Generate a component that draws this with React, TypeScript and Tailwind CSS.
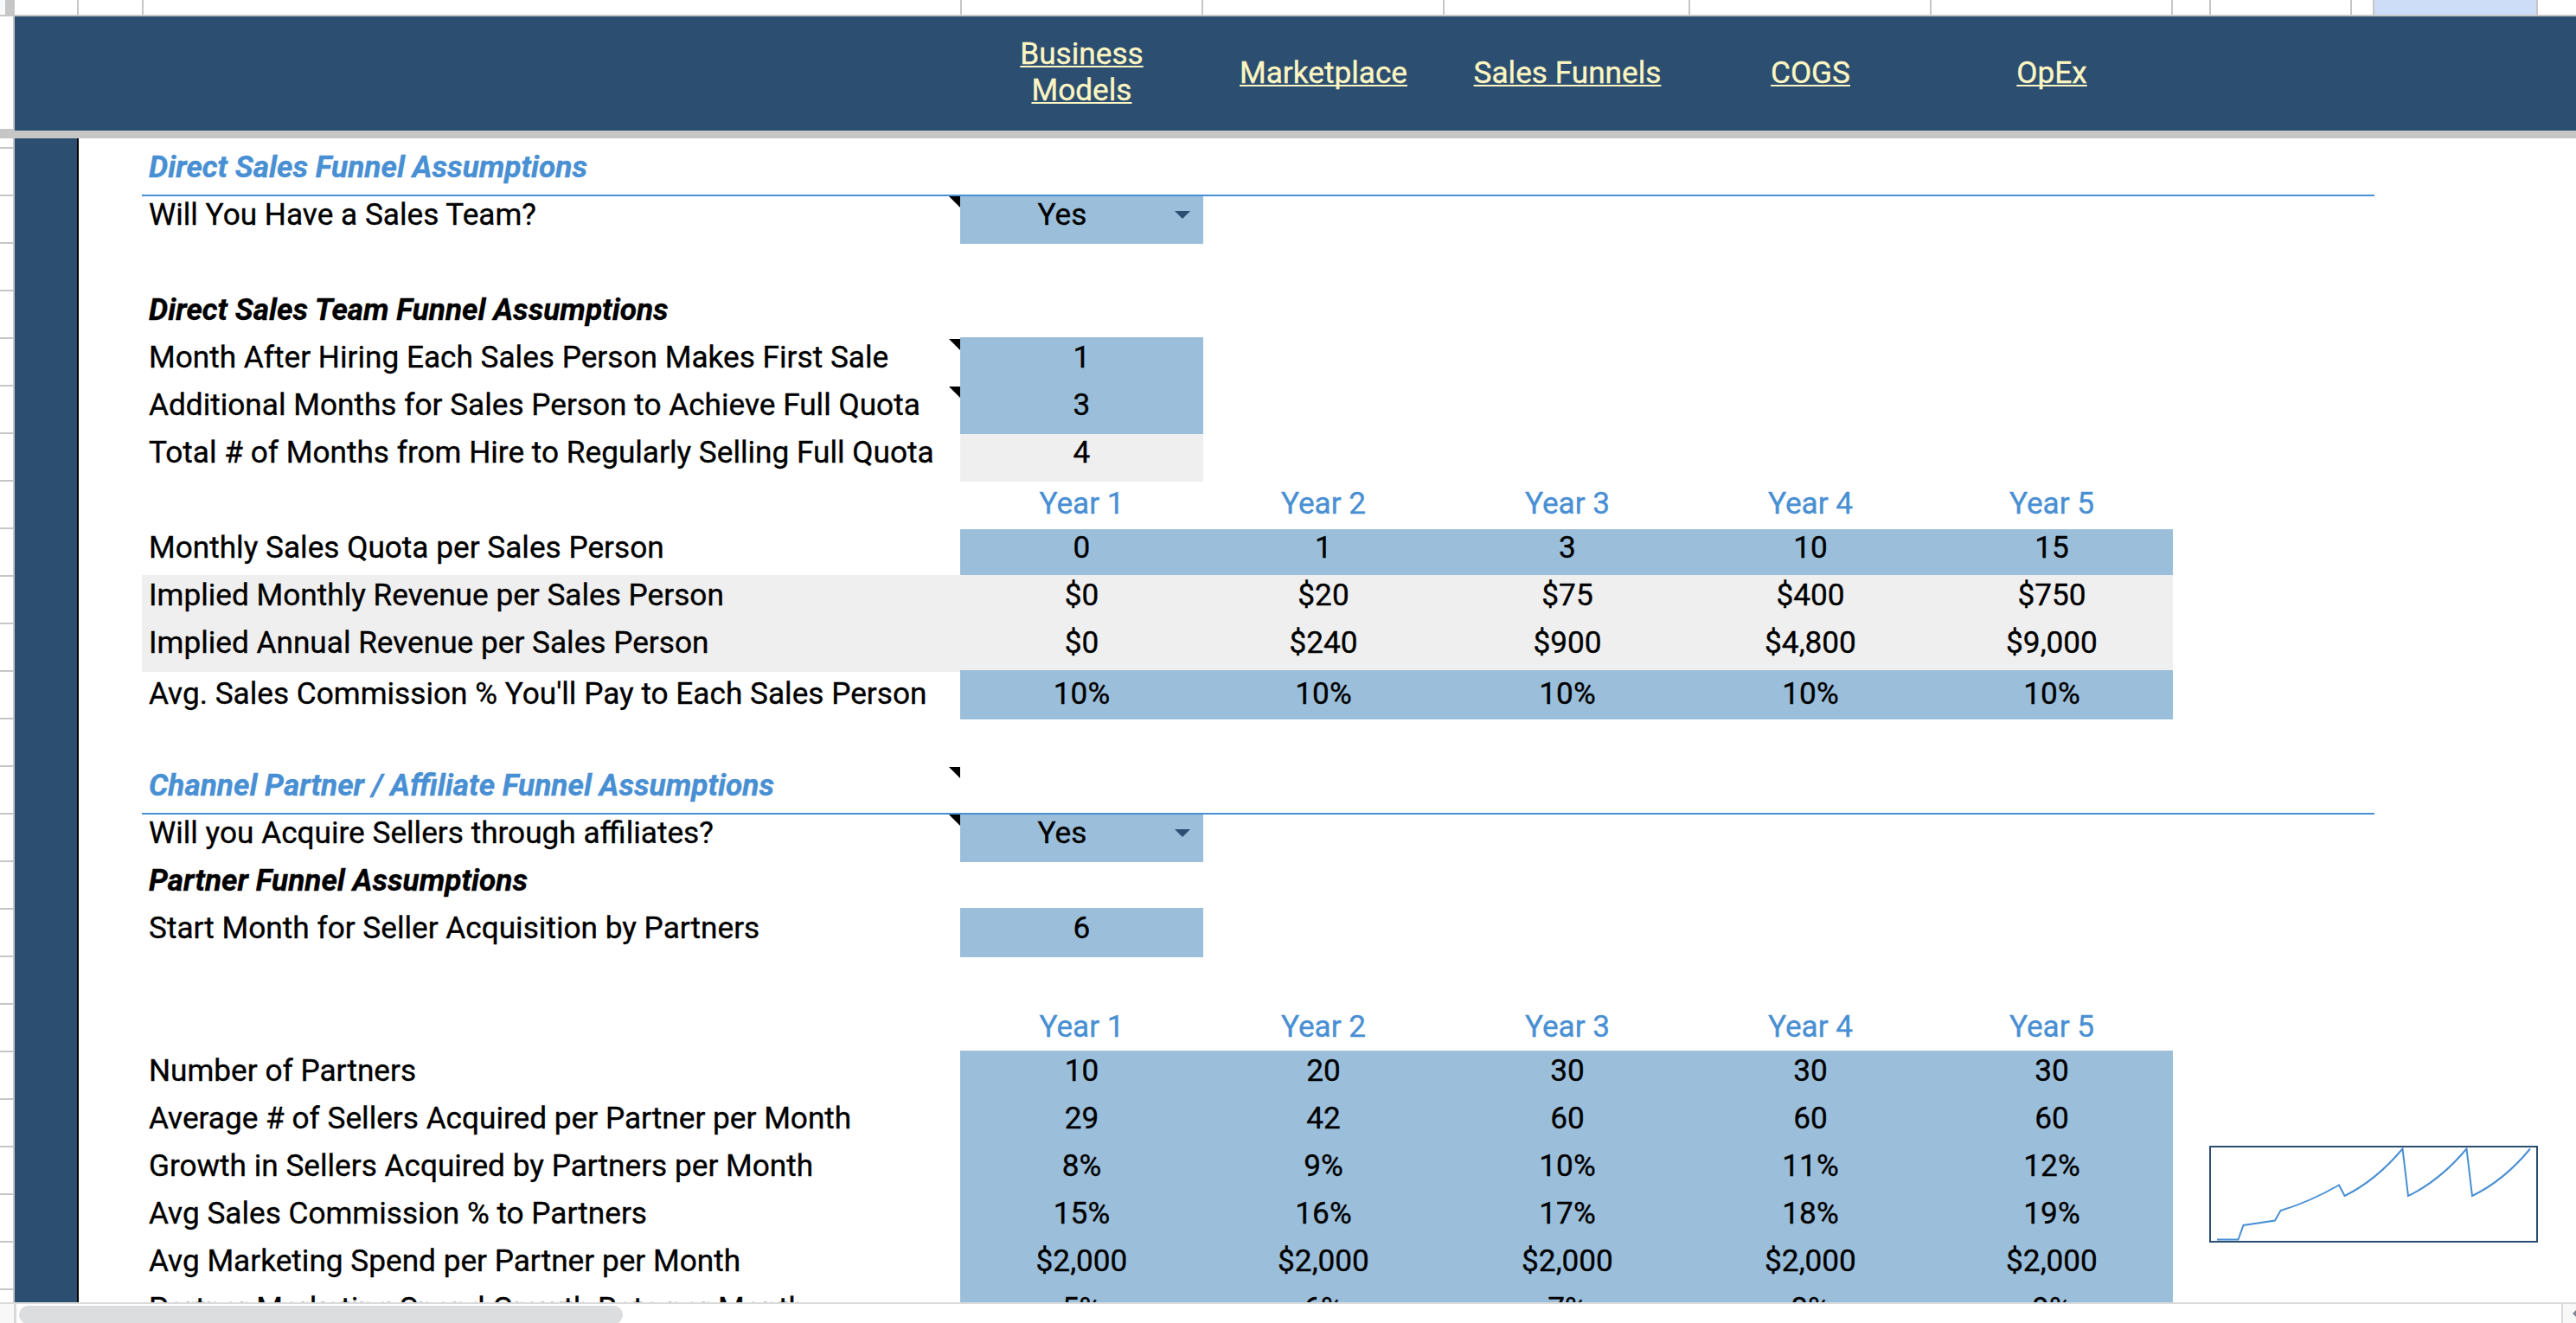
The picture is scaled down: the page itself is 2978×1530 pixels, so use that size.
import clsx from "clsx";

type Row = {
    label?: string;
    style?: "section" | "subtitle";
    note?: boolean;
    values?: string[];
    kind?: "input" | "calc" | "select" | "years";
    low?: boolean;
    shadeLabel?: boolean;
    overlapTop?: boolean;
};

const years = ["Year 1", "Year 2", "Year 3", "Year 4", "Year 5"];

const rows: Row[] = [
    { label: "Direct Sales Funnel Assumptions", style: "section" },
    { label: "Will You Have a Sales Team?", note: true, values: ["Yes"], kind: "select" },
    {},
    { label: "Direct Sales Team Funnel Assumptions", style: "subtitle" },
    { label: "Month After Hiring Each Sales Person Makes First Sale", note: true, values: ["1"], kind: "input", overlapTop: true },
    { label: "Additional Months for Sales Person to Achieve Full Quota", note: true, values: ["3"], kind: "input" },
    { label: "Total # of Months from Hire to Regularly Selling Full Quota", values: ["4"], kind: "calc" },
    { values: years, kind: "years", low: true },
    { label: "Monthly Sales Quota per Sales Person", values: ["0", "1", "3", "10", "15"], kind: "input" },
    { label: "Implied Monthly Revenue per Sales Person", values: ["$0", "$20", "$75", "$400", "$750"], kind: "calc", shadeLabel: true, overlapTop: true },
    { label: "Implied Annual Revenue per Sales Person", values: ["$0", "$240", "$900", "$4,800", "$9,000"], kind: "calc", shadeLabel: true },
    { label: "Avg. Sales Commission % You'll Pay to Each Sales Person", values: ["10%", "10%", "10%", "10%", "10%"], kind: "input", low: true, overlapTop: true },
    {},
    { label: "Channel Partner / Affiliate Funnel Assumptions", style: "section", note: true },
    { label: "Will you Acquire Sellers through affiliates?", note: true, values: ["Yes"], kind: "select" },
    { label: "Partner Funnel Assumptions", style: "subtitle" },
    { label: "Start Month for Seller Acquisition by Partners", values: ["6"], kind: "input", overlapTop: true },
    {},
    { values: years, kind: "years", low: true },
    { label: "Number of Partners", values: ["10", "20", "30", "30", "30"], kind: "input", overlapTop: true },
    { label: "Average # of Sellers Acquired per Partner per Month", values: ["29", "42", "60", "60", "60"], kind: "input" },
    { label: "Growth in Sellers Acquired by Partners per Month", values: ["8%", "9%", "10%", "11%", "12%"], kind: "input" },
    { label: "Avg Sales Commission % to Partners", values: ["15%", "16%", "17%", "18%", "19%"], kind: "input" },
    { label: "Avg Marketing Spend per Partner per Month", values: ["$2,000", "$2,000", "$2,000", "$2,000", "$2,000"], kind: "input" },
    { label: "Partner Marketing Spend Growth Rate per Month", values: ["5%", "6%", "7%", "8%", "9%"], kind: "input" },
];

const links = ["Business Models", "Marketplace", "Sales Funnels", "COGS", "OpEx"];

const colWidths = ["w-[281px]", "w-[279px] pr-px", "w-[284px]", "w-[279px] pr-px", "w-[279px] pr-px"];

const headerCells = [
    "w-[74px]",
    "w-[75px]",
    "w-[946px]",
    "w-[279px]",
    "w-[279px]",
    "w-[284px]",
    "w-[279px]",
    "w-[279px]",
    "w-[44px]",
    "w-[163px]",
    "w-[26px]",
];

function ColumnHeaders() {
    return (
        <div className="flex h-[19px] border-b-2 border-[#c6c6c6]">
            <div className="w-[6px] bg-[#f8f9fa]" />
            <div className="w-[11px] bg-[#c6c6c6]" />
            {headerCells.map((width, index) => (
                <div key={index} className={clsx(width, "shrink-0 border-r-2 border-[#c6c6c6]")} />
            ))}
            <div className="w-[189px] shrink-0 border-r-2 border-[#c6c6c6] bg-[#cdddf8]" />
        </div>
    );
}

function NavBar() {
    return (
        <div className="flex h-[141px]">
            <div className="w-[17px] shrink-0 border-r-2 border-b-[11px] border-[#c6c6c6]" />
            <div className="flex flex-1 items-center border-b-[9px] border-[#c6c6c6] bg-[#2c4e70] pb-[2px] pl-[1093px]">
                {links.map((link, index) => (
                    <div
                        key={link}
                        className={clsx(colWidths[index], "text-center leading-[42px] text-[#fdf6c3]", index === 0 && "mb-[2px] px-12")}
                    >
                        <a className="underline decoration-2 underline-offset-[2px] [text-decoration-skip-ink:none]">{link}</a>
                    </div>
                ))}
            </div>
        </div>
    );
}

function SheetRow({ row }: { row: Row }) {
    return (
        <div className={clsx("flex h-[55px] shrink-0 leading-[42px]", row.style === "section" && "w-[2581px] border-b-2 border-[#488fd3]")}>
            <div
                className={clsx(
                    "relative w-[946px] shrink-0 whitespace-pre pl-2",
                    row.style && "font-bold italic",
                    row.style === "section" && "text-[#488fd3]",
                    row.shadeLabel && "bg-[#efefef]",
                    row.shadeLabel && row.overlapTop && "-mt-[2px] pt-[2px]"
                )}
            >
                <div className={clsx(row.low && "pt-1")}>{row.label}</div>
                {row.note && (
                    <svg className="absolute top-0 right-0 h-[13px] w-[13px]" viewBox="0 0 13 13">
                        <path d="M0 0H13V13Z" fill="#000" />
                    </svg>
                )}
            </div>
            {row.values?.map((value, index) => (
                <div
                    key={index}
                    className={clsx(
                        colWidths[index],
                        "relative flex shrink-0 justify-center",
                        (row.kind === "input" || row.kind === "select") && "bg-[#9bbfdb]",
                        row.kind === "calc" && "bg-[#efefef]",
                        row.kind === "years" && "text-[#488fd3]",
                        row.overlapTop && "-mt-[2px] pt-[2px]"
                    )}
                >
                    <div className={clsx(row.low && "pt-1", row.kind === "select" && "mr-[45px]")}>{value}</div>
                    {row.kind === "select" && (
                        <svg className="absolute top-[17px] right-[15px] h-[9px] w-[18px]" viewBox="0 0 18 9">
                            <path d="M0 0H18L9 9Z" fill="#2c4e70" />
                        </svg>
                    )}
                </div>
            ))}
        </div>
    );
}

function Sparkline() {
    return (
        <svg className="absolute top-[1165px] left-[2554px] h-[112px] w-[380px]" viewBox="0 0 380 112">
            <rect x="1" y="1" width="378" height="110" fill="none" stroke="#2c4e70" strokeWidth="2" />
            <path
                d="M9 108.5H33.5L39.5 92L76 86.5L82.5 75Q116 65 150 45.5L156.5 58Q193 40 223.5 3.5L230 58Q267 40 297.5 3.5L304 58Q341 40 371 3.5"
                fill="none"
                stroke="#488fd3"
                strokeWidth="2"
            />
        </svg>
    );
}

export default function App() {
    return (
        <div className="flex h-[1530px] w-[2978px] flex-col overflow-hidden bg-white font-[Roboto,sans-serif] text-[35.2px] text-black [-webkit-text-stroke:0.35px]">
            <ColumnHeaders />
            <NavBar />

            <div className="relative flex h-[1346px] overflow-hidden">
                <div className="w-[17px] shrink-0 border-r-2 border-[#c6c6c6]">
                    <div className="h-3 border-b-2 border-[#c6c6c6]" />
                    {rows.map((_, index) => (
                        <div key={index} className="h-[55px] border-b-2 border-[#c6c6c6]" />
                    ))}
                </div>
                <div className="w-[74px] shrink-0 border-r-2 border-black bg-[#2c4e70]" />
                <div className="flex flex-1 flex-col pt-3 pl-[73px]">
                    {rows.map((row, index) => (
                        <SheetRow key={index} row={row} />
                    ))}
                </div>
                <Sparkline />
            </div>

            <div className="flex h-6 shrink-0 border-t-2 border-[#dadada]">
                <div className="w-[19px] border-r-[3px] border-[#dadada] bg-[#f8f8f8]" />
                <div className="flex-1 pt-[2px] pl-[3px]">
                    <div className="h-[21px] w-[698px] rounded-full bg-[#dcdddf]" />
                </div>
                <div className="flex w-[17px] items-center justify-end overflow-hidden border-l-2 border-[#dadada] bg-[#f8f8f8]">
                    <svg className="h-3 w-1" viewBox="0 0 4 12">
                        <path d="M0 6L4 2V10Z" fill="#80868b" />
                    </svg>
                </div>
            </div>
        </div>
    );
}
